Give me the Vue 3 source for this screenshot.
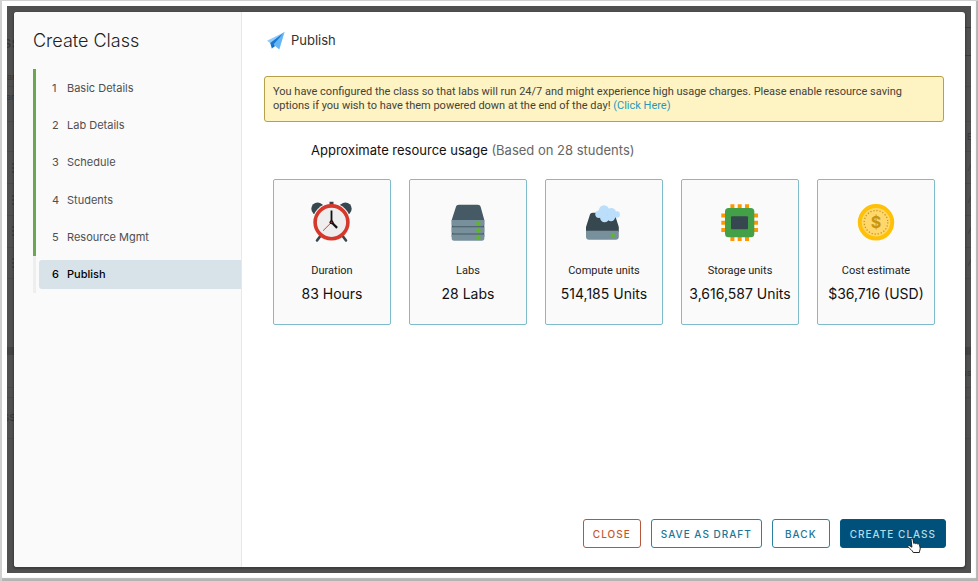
<script setup>
const steps = ['Basic Details', 'Lab Details', 'Schedule', 'Students', 'Resource Mgmt', 'Publish']
const current = steps.length - 1

const usage = [
  { icon: 'clock', label: 'Duration', value: '83 Hours' },
  { icon: 'server', label: 'Labs', value: '28 Labs' },
  { icon: 'compute', label: 'Compute units', value: '514,185 Units' },
  { icon: 'chip', label: 'Storage units', value: '3,616,587 Units' },
  { icon: 'coin', label: 'Cost estimate', value: '$36,716 (USD)' },
]
</script>

<template>
  <div class="frame">
    <div class="backdrop">
      <!-- dimmed page showing at both sides of the dialog -->
      <svg class="dimmed left" width="7" height="567" viewBox="0 0 7 567" aria-hidden="true">
        <path class="rule" d="M0 80.500h7M0 115.500h7M0 145.500h7M0 177.500h7M0 209.500h7M0 241.500h7M0 272.500h7M0 381.500h7M0 391.500h7M0 432.500h7" />
        <path class="band" d="M0 341h7v8H0z" />
        <text class="big" x="-4" y="42">ss</text>
        <text class="small" x="0" y="74">ar</text>
        <text class="small" x="-1" y="94">ar</text>
        <path class="menu" d="M5 157h2v2H5zM5 161h2v2H5zM5 165h2v2H5zM5 189h2v2H5zM5 193h2v2H5zM5 197h2v2H5zM5 220h2v2H5zM5 224h2v2H5zM5 228h2v2H5zM5 252h2v2H5zM5 256h2v2H5zM5 260h2v2H5z" />
        <text class="mid" x="-4" y="415">ss</text>
      </svg>
      <svg class="dimmed right" width="6" height="567" viewBox="0 0 6 567" aria-hidden="true">
        <path class="rule dark" d="M0 21.500h6M0 49.500h6" />
        <path class="rule" d="M0 80.500h6M0 115.500h6M0 145.500h6M0 177.500h6M0 209.500h6M0 241.500h6M0 272.500h6M0 381.500h6M0 391.500h6M0 432.500h6" />
        <path class="band" d="M0 341h6v8H0z" />
        <text class="small" x="2" y="134">E</text>
        <path class="slash" d="m3 165 4-8M3 197l4-8M3 228l4-8M3 260l4-8" />
        <text class="small" x="-3" y="370">ss</text>
      </svg>

      <section class="modal" role="dialog" aria-labelledby="wizard-title">
        <aside class="sidebar">
          <h1 id="wizard-title">Create Class</h1>
          <ol class="steps">
            <li v-for="(step, i) in steps" :key="step" :class="{ done: i < current, active: i === current }">
              <button type="button" class="step">
                <span class="num">{{ i + 1 }}</span>
                <span>{{ step }}</span>
              </button>
            </li>
          </ol>
        </aside>

        <main class="content">
          <h2 class="page-title">
            <svg width="18" height="18" viewBox="0 0 18 18" aria-hidden="true">
              <path fill="#90caf9" d="M17.600 0 0 8.800l4.200 3z" />
              <path fill="#1976d2" d="M17.600 0 3.200 11l1.600 5.600 2.400-3.600z" />
              <path fill="#64b5f6" d="M17.600 0 6.400 12.600l5.900 4.800z" />
              <path fill="#1565c0" d="m4.800 16.600 3.400-2.500-1.800-1.500z" />
            </svg>
            <span>Publish</span>
          </h2>

          <p class="alert">
            You have configured the class so that labs will run 24/7 and might experience high usage charges. Please
            enable resource saving options if you wish to have them powered down at the end of the day!
            <a href="#">(Click Here)</a>
          </p>

          <h3 class="usage-title">Approximate resource usage <span>(Based on 28 students)</span></h3>

          <div class="cards">
            <article v-for="item in usage" :key="item.label" class="card">
              <svg v-if="item.icon === 'clock'" width="44" height="44" viewBox="0 0 44 44" aria-hidden="true">
                <circle cx="7.600" cy="8.800" r="6.300" fill="#37474f" />
                <circle cx="35.400" cy="8.800" r="6.300" fill="#37474f" />
                <circle cx="21.500" cy="22.300" r="19.200" fill="#fafafa" />
                <path fill="#37474f" d="M19.500 1.800h4v4h-4z" />
                <path stroke="#37474f" stroke-width="2.600" stroke-linecap="round" d="m10 36.500-3 4M33 36.500l3 4" />
                <circle cx="21.500" cy="22.300" r="16.400" fill="#eeeeee" stroke="#d6392b" stroke-width="3.600" />
                <path stroke="#111" stroke-width="1.800" d="M21.500 22.800V10.600" />
                <path stroke="#111" stroke-width="2.200" d="m21.500 22.300 5.600 5.600" />
                <path stroke="#d6392b" stroke-width="1" d="m22.500 21.300-9.400 9.400" />
                <circle cx="21.500" cy="22.300" r="2" fill="#111" />
                <circle cx="21.500" cy="22.300" r="0.900" fill="#c62828" />
              </svg>

              <svg v-else-if="item.icon === 'server'" width="44" height="44" viewBox="0 0 44 44" aria-hidden="true">
                <path fill="#455a64" d="M13 4.700h18.600c1.600 0 2.700.8 3.100 2.400L38.300 20v17H5.700V20L9.900 7.100c.4-1.600 1.500-2.400 3.100-2.400z" />
                <path fill="#78909c" d="M5.700 20h32.600v4c0 1.300-.9 2.200-2.200 2.200H7.900c-1.300 0-2.200-.9-2.200-2.200z" />
                <path fill="#78909c" d="M5.700 27.300h32.600v4c0 1.300-.9 2.200-2.200 2.200H7.900c-1.300 0-2.200-.9-2.200-2.200z" />
                <path fill="#78909c" d="M5.700 34.600h32.600v4c0 1.300-.9 2.200-2.200 2.200H7.900c-1.300 0-2.200-.9-2.200-2.200z" />
                <g fill="#5fb727">
                  <circle cx="32.400" cy="23.200" r="2.200" />
                  <circle cx="32.400" cy="30.500" r="2.200" />
                  <circle cx="32.400" cy="37.800" r="2.200" />
                </g>
              </svg>

              <svg v-else-if="item.icon === 'compute'" width="44" height="44" viewBox="0 0 44 44" aria-hidden="true">
                <path fill="#37474f" d="M10.800 12.700h19.200c1.500 0 2.600.8 3 2.300L36.800 27v5H4v-5L7.800 15c.4-1.500 1.500-2.300 3-2.300z" />
                <path fill="#78909c" d="M4 30.700h32.800v6c0 1.800-1.200 3-3 3H7c-1.800 0-3-1.200-3-3z" />
                <circle cx="30.700" cy="35.200" r="2.200" fill="#5fb727" />
                <g fill="#bbdefb">
                  <circle cx="22" cy="10.400" r="5.200" />
                  <circle cx="29.300" cy="12.600" r="4.600" />
                  <circle cx="17" cy="14.300" r="3.700" />
                  <circle cx="34.700" cy="14.500" r="3.200" />
                  <circle cx="22.600" cy="17.800" r="4.500" />
                  <circle cx="29" cy="17" r="4.200" />
                </g>
              </svg>

              <svg v-else-if="item.icon === 'chip'" width="44" height="44" viewBox="0 0 44 44" aria-hidden="true">
                <g fill="#ff9800">
                  <path d="M12.400 4.300h4v36.700h-4zM19.700 4.300h4v36.700h-4zM27 4.300h4v36.700h-4z" />
                  <path d="M3.300 13.400h36.700v4H3.300zM3.300 20.700h36.700v4H3.300zM3.300 28h36.700v4H3.300z" />
                </g>
                <rect x="7" y="8" width="29.300" height="29.300" rx="3.500" fill="#43a047" />
                <rect x="13" y="16.200" width="17" height="13" rx="1" fill="#37474f" />
              </svg>

              <svg v-else width="44" height="44" viewBox="0 0 44 44" aria-hidden="true">
                <circle cx="22" cy="22.300" r="16.200" fill="#ffd76a" stroke="#ffc107" stroke-width="4" />
                <circle class="coin-dots" cx="22" cy="22.300" r="11.800" />
                <text class="coin-sign" x="22" y="28">$</text>
              </svg>

              <span class="label">{{ item.label }}</span>
              <strong class="value">{{ item.value }}</strong>
            </article>
          </div>

          <footer class="actions">
            <button type="button" class="btn danger">Close</button>
            <button type="button" class="btn">Save as draft</button>
            <button type="button" class="btn">Back</button>
            <button type="button" class="btn primary">
              Create class
              <svg class="pointer" width="15" height="16" viewBox="0 0 15 16" aria-hidden="true">
                <path
                  fill="#fff"
                  stroke="#222"
                  stroke-width="1"
                  d="M4 1.200c0-1 1.800-1 2 0l.8 4.300c.5-.7 1.600-.6 1.900.2.500-.6 1.600-.5 1.900.4.6-.5 1.700-.3 1.900.7l.7 3.200c.2 1.400-.7 2.400-.8 4.500H6.200C5.500 12.300 2.500 10.700 1 8.800.4 7.800 1.600 7 2.600 7.700l2.300 1.500z"
                />
              </svg>
            </button>
          </footer>
        </main>
      </section>
    </div>
  </div>
</template>

<style>
body {
  background: #fff;
}
</style>

<style scoped>
.frame,
.frame * {
  box-sizing: border-box;
}
.frame {
  display: flex;
  min-height: 100vh;
  padding: 6px 7px 8px;
  background: #fff;
  box-shadow: inset 2px 1px 0 #d0d0d0, inset -2px -3px 1px #b4b4b4;
  font-family: Inter, "Liberation Sans", sans-serif;
  color: #313131;
}
.backdrop {
  position: relative;
  display: flex;
  flex: 1;
  padding: 6px 6px 6px 7px;
  background: #505050;
}
.dimmed {
  position: absolute;
  top: 0;
  overflow: hidden;
}
.dimmed.left {
  left: 0;
}
.dimmed.right {
  right: 0;
}
.dimmed text {
  fill: #383838;
}
.big {
  font-size: 16px;
}
.mid {
  font-size: 12px;
}
.small {
  font-size: 9px;
}
.rule {
  stroke: #494949;
}
.rule.dark {
  stroke: #3c3c3c;
}
.band {
  fill: #434343;
}
.menu {
  fill: #404040;
}
.slash {
  stroke: #404040;
}
.modal {
  position: relative;
  display: flex;
  flex: 1;
  border-radius: 3px;
  overflow: hidden;
  background: #fff;
  box-shadow: 0 1px 2px 1px rgba(0, 0, 0, 0.25);
}
.sidebar {
  flex: 0 0 228px;
  padding: 17px 0 0 19px;
  background: #fafafa;
  border-right: 1px solid #e8e8e8;
}
h1 {
  margin: 0;
  font-size: 18px;
  line-height: 24px;
  font-weight: 300;
  color: #222;
}
.steps {
  display: flex;
  flex-direction: column;
  height: 224px;
  margin: 16px 0 0;
  padding: 0;
  list-style: none;
}
.steps li {
  display: flex;
  flex: 1;
  align-items: center;
  padding-left: 3px;
  border-left: 3px solid #eee;
}
.steps li.done {
  border-left-color: #6aa84f;
}
.step {
  display: flex;
  flex: 1;
  align-items: center;
  gap: 8px;
  height: 29px;
  padding: 0 0 0 13px;
  border: 0;
  border-radius: 3px 0 0 3px;
  background: none;
  font: inherit;
  font-size: 11px;
  color: #4f4f4f;
  text-align: left;
}
.num {
  width: 7px;
}
.active .step {
  background: #d8e3e9;
  color: #000;
  font-weight: 500;
}
.content {
  display: flex;
  flex: 1;
  flex-direction: column;
  min-width: 0;
  padding: 18px 19px 19px 22px;
}
.page-title {
  display: flex;
  align-items: center;
  gap: 6px;
  margin: 0;
  padding-left: 3px;
  font-size: 13px;
  line-height: 21px;
  font-weight: 400;
}
.alert {
  margin: 25px 2px 0 0;
  padding: 8px;
  border: 1px solid #b8a04a;
  border-radius: 3px;
  background: #fef3c3;
  font-family: Roboto, "Liberation Sans", sans-serif;
  font-size: 11px;
  line-height: 14px;
  color: #454238;
}
.alert a {
  color: #1f9bc0;
  text-decoration: none;
}
.usage-title {
  margin: 18px 0 0 47px;
  font-size: 13px;
  line-height: 20px;
  font-weight: 400;
  color: #111;
}
.usage-title span {
  color: #666;
}
.cards {
  display: grid;
  grid-template-columns: repeat(5, 1fr);
  gap: 18px;
  margin: 19px 11px 0 9px;
}
.card {
  display: flex;
  flex-direction: column;
  align-items: center;
  padding: 20px 0;
  border: 1px solid #7fbccb;
  border-radius: 2px;
  background: #fafafa;
  white-space: nowrap;
}
.label {
  margin-top: 20px;
  font-family: Roboto, "Liberation Sans", sans-serif;
  font-size: 11px;
  line-height: 14px;
  color: #222;
}
.value {
  margin-top: 6px;
  font-size: 14px;
  line-height: 20px;
  font-weight: 400;
  color: #111;
}
.coin-dots {
  fill: none;
  stroke: #c59a1d;
  stroke-width: 1.300;
  stroke-dasharray: 1.300 1.790;
}
.coin-sign {
  fill: #c8960c;
  font-size: 16px;
  font-weight: 700;
  text-anchor: middle;
}
.actions {
  display: flex;
  justify-content: flex-end;
  gap: 10px;
  margin-top: auto;
}
.btn {
  position: relative;
  min-width: 58px;
  height: 29px;
  padding: 0 9px;
  border: 1px solid #2b82a0;
  border-radius: 3px;
  background: #fff;
  font: inherit;
  font-size: 10px;
  font-weight: 500;
  letter-spacing: 1px;
  text-transform: uppercase;
  color: #1c7596;
}
.danger {
  border-color: #b5573a;
  color: #c4562f;
}
.primary {
  border-color: #00567f;
  background: #00507c;
  color: #b5dce6;
}
.pointer {
  position: absolute;
  left: 66px;
  top: 18px;
}
</style>
